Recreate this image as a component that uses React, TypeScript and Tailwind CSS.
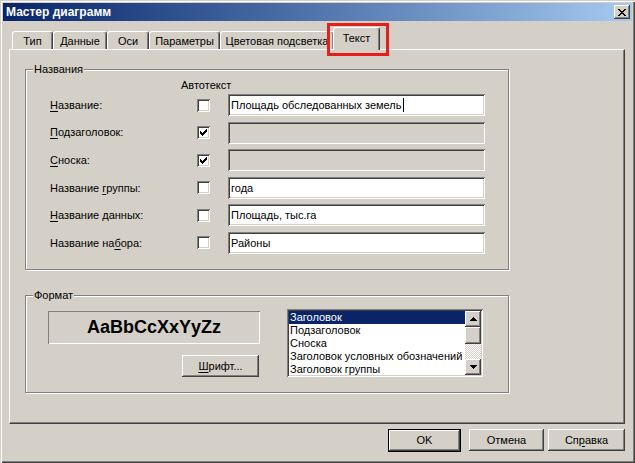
import React from "react";

const raised =
  "shadow-[inset_-1px_-1px_#404040,inset_1px_1px_#ffffff,inset_-2px_-2px_#808080,inset_2px_2px_#d4d0c8]";
const sunken =
  "shadow-[inset_1px_1px_#808080,inset_-1px_-1px_#ffffff,inset_2px_2px_#404040,inset_-2px_-2px_#d4d0c8]";

function Check() {
  const cols: [number, number][] = [
    [3, 5],
    [4, 6],
    [5, 7],
    [6, 6],
    [7, 5],
    [8, 4],
    [9, 3],
  ];
  return (
    <svg width="13" height="13" viewBox="0 0 13 13" className="absolute left-0 top-0" shapeRendering="crispEdges">
      {cols.map(([x, y]) => (
        <rect key={x} x={x} y={y} width="1" height="3" fill="#000" />
      ))}
    </svg>
  );
}

function CheckBox({ checked }: { checked?: boolean }) {
  return (
    <div className={`relative w-[13px] h-[13px] shrink-0 bg-white ${sunken}`}>
      {checked && <Check />}
    </div>
  );
}

function Field({ value, disabled, caret }: { value?: string; disabled?: boolean; caret?: boolean }) {
  return (
    <div
      className={`w-[257px] h-[22px] flex items-center pl-[3px] ${sunken} ${disabled ? "bg-[#d4d0c8]" : "bg-white"}`}
    >
      <span className="whitespace-nowrap">{value}</span>
      {caret && <span className="w-px h-[14px] bg-black ml-[1px]" />}
    </div>
  );
}

function U({ children }: { children: React.ReactNode }) {
  return <span className="underline underline-offset-[2px]">{children}</span>;
}

function Group({ title, className, children }: { title: string; className?: string; children: React.ReactNode }) {
  return (
    <div
      className={`relative border border-[#808080] shadow-[inset_1px_1px_#ffffff,1px_1px_#ffffff] ${className ?? ""}`}
    >
      <span className="absolute left-[7px] top-[-8px] bg-[#d4d0c8] px-[1px] leading-[14px]">{title}</span>
      {children}
    </div>
  );
}

function Tab({ label, w, selected }: { label: string; w: string; selected?: boolean }) {
  return (
    <div
      className={`${w} ${
        selected ? "h-[23px] -mb-px relative z-10 pt-[3px]" : "h-[18px] pt-[2px]"
      } shrink-0 bg-[#d4d0c8] border-l border-t border-white border-r border-r-[#404040] rounded-t-[3px] shadow-[inset_-1px_0_#808080] flex justify-center whitespace-nowrap overflow-hidden`}
    >
      <span className="leading-[14px]">{label}</span>
    </div>
  );
}

function Arrow({ up }: { up?: boolean }) {
  return (
    <svg width="7" height="4" viewBox="0 0 7 4" shapeRendering="crispEdges">
      {up ? <polygon points="3.5,0 7,4 0,4" fill="#000" /> : <polygon points="0,0 7,0 3.5,4" fill="#000" />}
    </svg>
  );
}

const rows: { label: React.ReactNode; checked?: boolean; value?: string; disabled?: boolean; caret?: boolean }[] = [
  { label: <><U>Н</U>азвание:</>, value: "Площадь обследованных земель", caret: true },
  { label: <><U>П</U>одзаголовок:</>, checked: true, disabled: true },
  { label: <><U>С</U>носка:</>, checked: true, disabled: true },
  { label: <>Название <U>г</U>руппы:</>, value: "года" },
  { label: <><U>Н</U>азвание данных:</>, value: "Площадь, тыс.га" },
  { label: <>Название на<U>б</U>ора:</>, value: "Районы" },
];

const listItems = [
  "Заголовок",
  "Подзаголовок",
  "Сноска",
  "Заголовок условных обозначений",
  "Заголовок группы",
];

export default function App() {
  return (
    <div
      className="w-[635px] h-[463px] bg-[#d4d0c8] flex flex-col p-[3px] overflow-hidden text-[11px] text-black font-['Liberation_Sans',Arial,sans-serif] shadow-[inset_1px_1px_#d4d0c8,inset_2px_2px_#ffffff,inset_-1px_-1px_#404040,inset_-2px_-2px_#808080]"
    >
      {/* Title bar */}
      <div className="h-[18px] shrink-0 flex items-center justify-between pl-[3px] pr-[2px] bg-gradient-to-r from-[#0a246a] to-[#a6caf0]">
        <span className="text-white font-bold text-[12px] leading-[14px]">Мастер диаграмм</span>
        <div className={`w-[16px] h-[14px] bg-[#d4d0c8] flex items-center justify-center ${raised}`}>
          <svg width="8" height="7" viewBox="0 0 8 7" shapeRendering="crispEdges">
            <path d="M0 0h2v1h-2zM6 0h2v1h-2zM1 1h2v1h-2zM5 1h2v1h-2zM2 2h4v1h-4zM3 3h2v1h-2zM2 4h4v1h-4zM1 5h2v1h-2zM5 5h2v1h-2zM0 6h2v1h-2zM6 6h2v1h-2z" fill="#000" />
          </svg>
        </div>
      </div>

      {/* Tabs */}
      <div className="h-[28px] shrink-0 flex items-end pl-[9px] relative">
        <Tab label="Тип" w="w-[41px]" />
        <Tab label="Данные" w="w-[54px]" />
        <Tab label="Оси" w="w-[42px]" />
        <Tab label="Параметры" w="w-[71px]" />
        <Tab label="Цветовая подсветка" w="w-[114px]" />
        <div className="-ml-px relative z-10">
          <Tab label="Текст" w="w-[47px]" selected />
          <div className="absolute left-[-6px] top-[-4px] w-[62px] h-[33px] border-[3px] border-[#e3201b] z-20" />
        </div>
      </div>

      {/* Panel */}
      <div
        className={`ml-[6px] w-[616px] h-[375px] shrink-0 bg-[#d4d0c8] pt-[19px] pl-[15px] flex flex-col border-l border-t border-white border-r border-b border-r-[#404040] border-b-[#404040] shadow-[inset_-1px_-1px_#808080]`}
      >
        <Group title="Названия" className="w-[484px] h-[201px] shrink-0">
          <div className="pt-[8px] pl-[155px] h-[22px] leading-[14px]">Автотекст</div>
          <div className="mt-[2px] flex flex-col gap-[5.6px]">
            {rows.map((r, i) => (
              <div key={i} className="h-[22px] flex items-center">
                <div className="w-[171px] pl-[24px] whitespace-nowrap">{r.label}</div>
                <CheckBox checked={r.checked} />
                <div className="w-[18px]" />
                <Field value={r.value} disabled={r.disabled} caret={r.caret} />
              </div>
            ))}
          </div>
        </Group>

        <Group title="Формат" className="mt-[25px] w-[484px] h-[98px] shrink-0">
          <div className="flex">
            <div className="ml-[22px] w-[212px] flex flex-col">
              <div className="mt-[15px] h-[33px] flex items-center justify-center shadow-[inset_1px_1px_#808080,inset_-1px_-1px_#ffffff] font-bold text-[18px] font-['Liberation_Sans',Arial,sans-serif]">
                AaBbCcXxYyZz
              </div>
              <div className={`mt-[11px] ml-[134px] w-[77px] h-[22px] flex items-center justify-center ${raised}`}>
                <span>
                  <U>Ш</U>рифт...
                </span>
              </div>
            </div>
            <div className={`ml-[27px] mt-[13px] w-[196px] h-[68px] bg-white p-[2px] flex ${sunken}`}>
              <div className="flex-1 flex flex-col overflow-hidden">
                {listItems.map((t, i) => (
                  <div
                    key={t}
                    className={`h-[13px] leading-[13px] pl-[1px] whitespace-nowrap ${
                      i === 0 ? "bg-[#0a246a] text-white" : ""
                    }`}
                  >
                    {t}
                  </div>
                ))}
              </div>
              <div className="w-[16px] flex flex-col">
                <div className={`h-[16px] bg-[#d4d0c8] flex items-center justify-center ${raised}`}>
                  <Arrow up />
                </div>
                <div className={`h-[17px] bg-[#d4d0c8] ${raised}`} />
                <div className="flex-1 bg-[image:repeating-conic-gradient(#ffffff_0_25%,#d4d0c8_0_50%)] bg-[length:2px_2px]" />
                <div className={`h-[16px] bg-[#d4d0c8] flex items-center justify-center ${raised}`}>
                  <Arrow />
                </div>
              </div>
            </div>
          </div>
        </Group>
      </div>

      {/* Buttons */}
      <div className="mt-[5px] flex justify-end pr-[7px]">
        <div className="w-[73px] h-[23px] border border-black">
          <div className={`w-full h-full flex items-center justify-center ${raised}`}>OK</div>
        </div>
        <div className={`ml-[8px] w-[75px] h-[22px] flex items-center justify-center ${raised}`}>Отмена</div>
        <div className={`ml-[4px] w-[77px] h-[22px] flex items-center justify-center ${raised}`}>
          <span>
            Сп<U>р</U>авка
          </span>
        </div>
      </div>
    </div>
  );
}
